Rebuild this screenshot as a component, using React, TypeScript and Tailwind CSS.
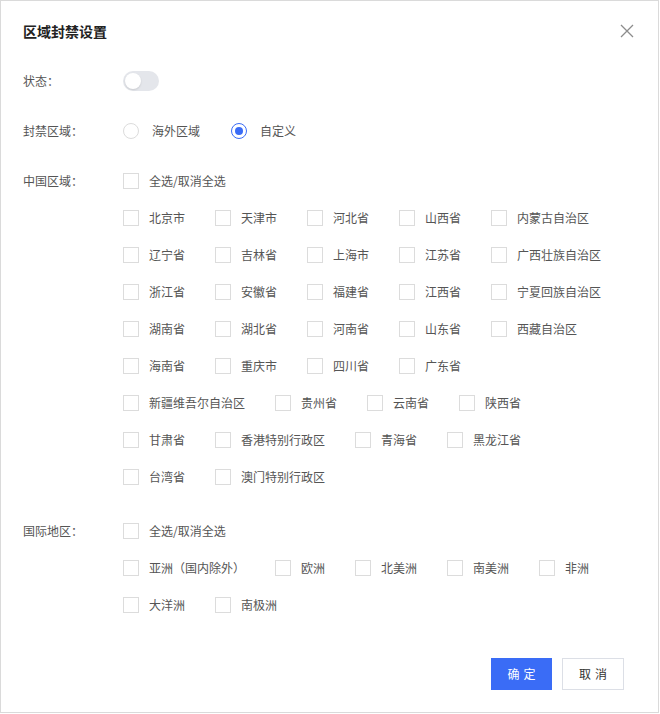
import React from "react";

const chinaRows: string[][] = [
  ["北京市", "天津市", "河北省", "山西省", "内蒙古自治区"],
  ["辽宁省", "吉林省", "上海市", "江苏省", "广西壮族自治区"],
  ["浙江省", "安徽省", "福建省", "江西省", "宁夏回族自治区"],
  ["湖南省", "湖北省", "河南省", "山东省", "西藏自治区"],
  ["海南省", "重庆市", "四川省", "广东省"],
  ["新疆维吾尔自治区", "贵州省", "云南省", "陕西省"],
  ["甘肃省", "香港特别行政区", "青海省", "黑龙江省"],
  ["台湾省", "澳门特别行政区"],
];

const worldRows: string[][] = [
  ["亚洲（国内除外）", "欧洲", "北美洲", "南美洲", "非洲"],
  ["大洋洲", "南极洲"],
];

function Check({ label }: { label: string }) {
  return (
    <label className="flex items-center h-[20px] mr-[30px] cursor-pointer">
      <span className="block w-[16px] h-[16px] border border-[#dcdcdc] bg-white" />
      <span className="ml-[10px] text-[12px] leading-[20px] text-[#555] whitespace-nowrap">{label}</span>
    </label>
  );
}

function Radio({ label, checked }: { label: string; checked?: boolean }) {
  return (
    <label className="flex items-center h-[20px] mr-[31px] cursor-pointer">
      <span
        className={
          checked
            ? "flex items-center justify-center w-[16px] h-[16px] rounded-full border border-[#3a6cf6] bg-white"
            : "flex items-center justify-center w-[16px] h-[16px] rounded-full border border-[#dcdcdc] bg-white"
        }
      >
        {checked && <span className="block w-[8px] h-[8px] rounded-full bg-[#3a6cf6]" />}
      </span>
      <span className="ml-[13px] text-[12px] leading-[20px] text-[#555] whitespace-nowrap">{label}</span>
    </label>
  );
}

function Label({ text }: { text: string }) {
  return <div className="w-[100px] shrink-0 h-[20px] text-[12px] leading-[20px] text-[#555]">{text}</div>;
}

function CheckRow({ items }: { items: string[] }) {
  return (
    <div className="flex">
      {items.map((t) => (
        <Check key={t} label={t} />
      ))}
    </div>
  );
}

export default function App() {
  return (
    <div
      className="w-[659px] h-[713px] border border-[#dadada] bg-white flex flex-col"
      style={{ fontFamily: '"Noto Sans CJK SC", "Noto Sans", sans-serif' }}
    >
      {/* header */}
      <div className="flex items-center justify-between pl-[22px] pr-[23px] pt-[20px]">
        <div className="h-[20px] text-[14px] leading-[20px] font-bold text-[#222]">区域封禁设置</div>
        <button className="w-[16px] h-[16px] flex items-center justify-center text-[#8c8c8c]" aria-label="关闭">
          <svg width="14" height="14" viewBox="0 0 14 14" fill="none" stroke="currentColor" strokeWidth="1.3">
            <path d="M1 1 L13 13 M13 1 L1 13" />
          </svg>
        </button>
      </div>

      <div className="pl-[22px] flex flex-col">
        {/* status */}
        <div className="flex mt-[30px]">
          <Label text="状态：" />
          <div className="w-[36px] h-[20px] rounded-full bg-[#e4e6eb] p-[2px] flex items-center">
            <span className="block w-[16px] h-[16px] rounded-full bg-white shadow-[0_1px_2px_rgba(0,0,0,0.12)]" />
          </div>
        </div>

        {/* scope */}
        <div className="flex mt-[30px]">
          <Label text="封禁区域：" />
          <div className="flex">
            <Radio label="海外区域" />
            <Radio label="自定义" checked />
          </div>
        </div>

        {/* china */}
        <div className="flex mt-[30px]">
          <Label text="中国区域：" />
          <div className="flex flex-col gap-y-[17px]">
            <CheckRow items={["全选/取消全选"]} />
            {chinaRows.map((row, i) => (
              <CheckRow key={i} items={row} />
            ))}
          </div>
        </div>

        {/* world */}
        <div className="flex mt-[34px]">
          <Label text="国际地区：" />
          <div className="flex flex-col gap-y-[17px]">
            <CheckRow items={["全选/取消全选"]} />
            {worldRows.map((row, i) => (
              <CheckRow key={i} items={row} />
            ))}
          </div>
        </div>
      </div>

      {/* footer */}
      <div className="mt-auto flex justify-end gap-[10px] pr-[34px] pb-[22px]">
        <button className="w-[61px] h-[32px] bg-[#3a6cf6] text-white text-[12px] tracking-[4px] pl-[4px]">确定</button>
        <button className="w-[62px] h-[32px] border border-[#dcdfe6] bg-white text-[#333] text-[12px] tracking-[4px] pl-[4px]">
          取消
        </button>
      </div>
    </div>
  );
}
